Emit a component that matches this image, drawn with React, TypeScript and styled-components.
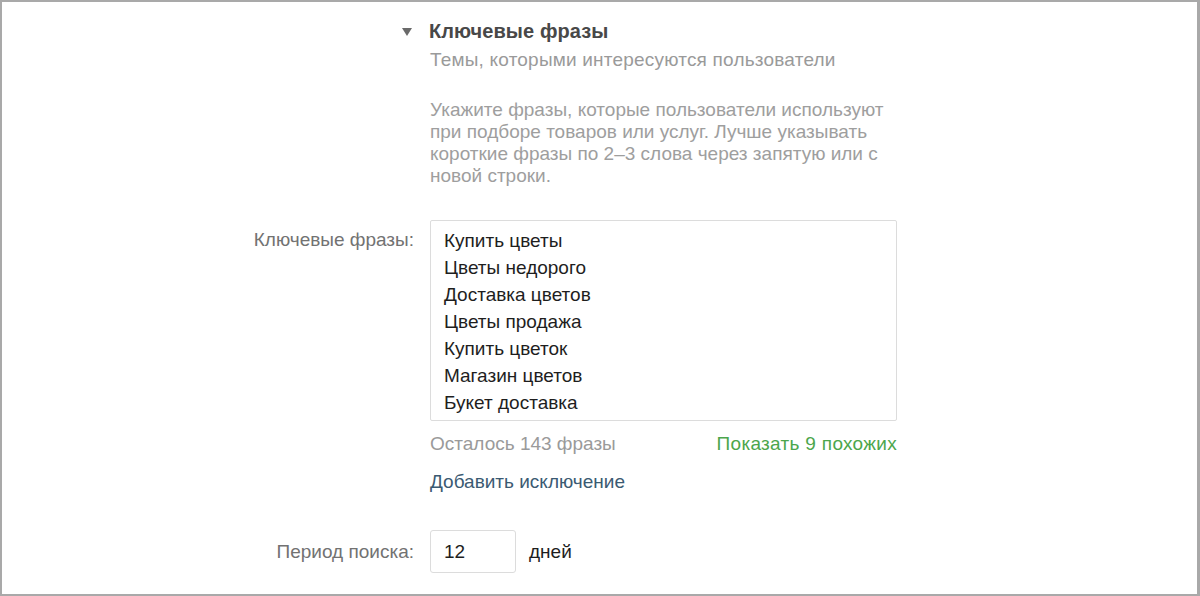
import * as React from 'react'
import styled, { createGlobalStyle } from 'styled-components'

const GlobalStyle = createGlobalStyle`
    html, body {
        margin: 0;
        padding: 0;
        background: #fff;
    }
    body {
        font-family: "Liberation Sans", Arial, sans-serif;
        -webkit-font-smoothing: antialiased;
    }
`

const LABEL_COL = 414
const GAP = 16
const FIELD_W = 467

const Frame = styled.div`
    box-sizing: border-box;
    width: 1200px;
    height: 596px;
    border: 2px solid #a9a9a9;
    border-right-width: 3px;
    background: #fff;
    padding-top: 16px;
    overflow: hidden;
`

const Row = styled.div<{ mt?: number; align?: 'start' | 'center' }>`
    display: grid;
    grid-template-columns: ${LABEL_COL - 2}px ${FIELD_W}px auto;
    column-gap: ${GAP}px;
    align-items: ${({ align }) => (align === 'center' ? 'center' : 'start')};
    margin-top: ${({ mt }) => mt ?? 0}px;
`

const Label = styled.div<{ pt?: number }>`
    text-align: right;
    font-size: 19px;
    line-height: 22px;
    color: #727272;
    padding-top: ${({ pt }) => pt ?? 0}px;
`

const Toggle = styled.div`
    display: flex;
    justify-content: flex-end;
    padding-top: 10px;
    padding-right: 2px;
`

const Triangle = styled.span`
    width: 0;
    height: 0;
    border-left: 5px solid transparent;
    border-right: 5px solid transparent;
    border-top: 8px solid #6a6a6a;
`

const Heading = styled.h2`
    margin: 0 0 0 -1px;
    font-size: 20px;
    line-height: 26px;
    font-weight: 700;
    color: #484848;
    letter-spacing: 0.1px;
`

const Subtitle = styled.p`
    margin: 5px 0 0;
    font-size: 19px;
    line-height: 22px;
    color: #9a9a9a;
    letter-spacing: 0.2px;
`

const Hint = styled.p`
    margin: 28px 0 0;
    font-size: 19px;
    line-height: 22px;
    color: #9e9e9e;
    width: 472px;
`

const PhraseBox = styled.div`
    box-sizing: border-box;
    height: 201px;
    border: 1px solid #dcdcdc;
    border-radius: 2px;
    padding: 6px 13px 0;
`

const Phrase = styled.div`
    font-size: 19px;
    line-height: 27px;
    color: #1e1e1e;
`

const Meta = styled.div`
    display: flex;
    justify-content: space-between;
    margin-top: 12px;
    font-size: 19px;
    line-height: 22px;
`

const Muted = styled.span`
    color: #9a9a9a;
`

const Action = styled.a<{ tone: 'green' | 'blue' }>`
    color: ${({ tone }) => (tone === 'green' ? '#4ca64c' : '#3b5a72')};
    text-decoration: none;
    cursor: pointer;
    font-size: 19px;
    line-height: 22px;
    letter-spacing: ${({ tone }) => (tone === 'green' ? '0.3px' : '0')};
`

const ExtraLink = styled.div`
    margin-top: 16px;
`

const PeriodField = styled.div`
    display: flex;
    align-items: center;
    gap: 13px;
`

const SmallInput = styled.div`
    box-sizing: border-box;
    width: 86px;
    height: 43px;
    border: 1px solid #dcdcdc;
    border-radius: 3px;
    padding-left: 13px;
    display: flex;
    align-items: center;
    font-size: 19px;
    color: #1e1e1e;
`

const Unit = styled.span`
    font-size: 19px;
    color: #1e1e1e;
`

const phrases = [
    'Купить цветы',
    'Цветы недорого',
    'Доставка цветов',
    'Цветы продажа',
    'Купить цветок',
    'Магазин цветов',
    'Букет доставка',
]

export default function App() {
    return (
        <>
            <GlobalStyle />
            <Frame>
                <Row>
                    <Toggle>
                        <Triangle />
                    </Toggle>
                    <div>
                        <Heading>Ключевые фразы</Heading>
                        <Subtitle>Темы, которыми интересуются пользователи</Subtitle>
                        <Hint>
                            Укажите фразы, которые пользователи используют при подборе товаров
                            или услуг. Лучше указывать короткие фразы по 2–3 слова через
                            запятую или с новой строки.
                        </Hint>
                    </div>
                </Row>

                <Row mt={33}>
                    <Label pt={9}>Ключевые фразы:</Label>
                    <div>
                        <PhraseBox>
                            {phrases.map(p => (
                                <Phrase key={p}>{p}</Phrase>
                            ))}
                        </PhraseBox>
                        <Meta>
                            <Muted>Осталось 143 фразы</Muted>
                            <Action tone="green">Показать 9 похожих</Action>
                        </Meta>
                        <ExtraLink>
                            <Action tone="blue">Добавить исключение</Action>
                        </ExtraLink>
                    </div>
                </Row>

                <Row mt={37} align="center">
                    <Label>Период поиска:</Label>
                    <PeriodField>
                        <SmallInput>12</SmallInput>
                        <Unit>дней</Unit>
                    </PeriodField>
                </Row>
            </Frame>
        </>
    )
}
